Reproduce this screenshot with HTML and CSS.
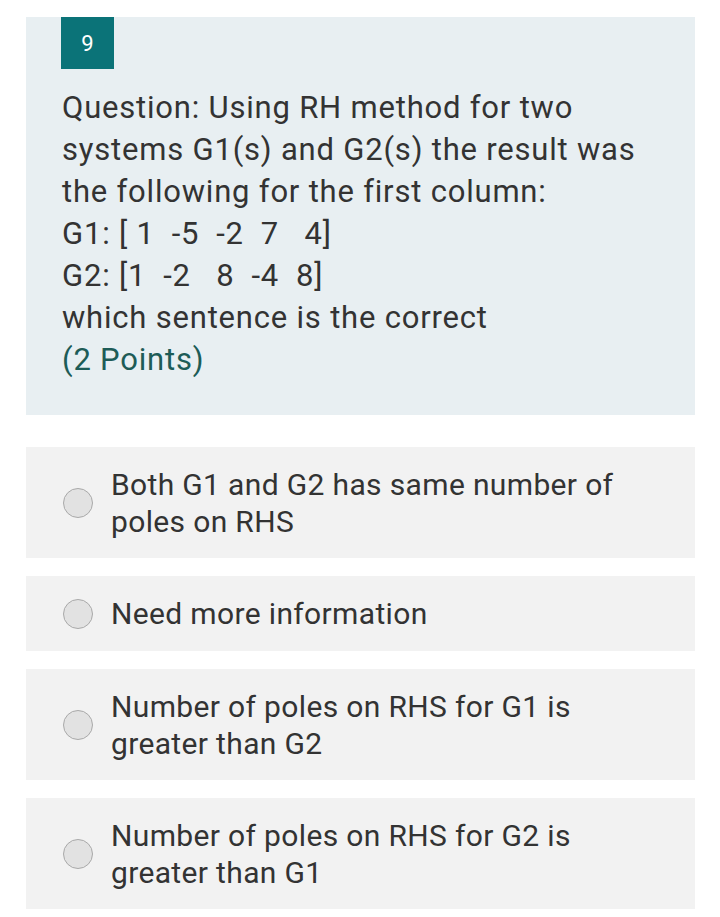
FILE: index.html
```html
<!DOCTYPE html>
<html>
<head>
<meta charset="utf-8">
<link rel="stylesheet" href="styles.css">
</head>
<body>
<div class="page">
  <section class="question">
    <div class="badge">9</div>
    <div class="qtext">
      <div>Question: Using RH method for two systems G1(s) and G2(s) the result was the following for the first column:</div>
      <div>G1: [ 1&nbsp; -5&nbsp; -2&nbsp; 7&nbsp;&nbsp; 4]</div>
      <div>G2: [1&nbsp; -2&nbsp;&nbsp; 8&nbsp; -4&nbsp; 8]</div>
      <div>which sentence is the correct</div>
      <div class="points">(2 Points)</div>
    </div>
  </section>
  <div class="options">
    <label class="option"><span class="radio"></span><span class="otext">Both G1 and G2 has same number of poles on RHS</span></label>
    <label class="option"><span class="radio"></span><span class="otext">Need more information</span></label>
    <label class="option"><span class="radio"></span><span class="otext">Number of poles on RHS for G1 is greater than G2</span></label>
    <label class="option"><span class="radio"></span><span class="otext">Number of poles on RHS for G2 is greater than G1</span></label>
  </div>
</div>
</body>
</html>
```

FILE: styles.css
```css
html, body {
  margin: 0;
  padding: 0;
  background: #ffffff;
}
body {
  font-family: Roboto, "Liberation Sans", sans-serif;
  color: #333333;
}
.page {
  padding: 17px 25px 0 26px;
}
.question {
  background: #e8eff2;
  padding: 0 35px 34px 35px;
}
.badge {
  width: 53px;
  height: 52px;
  background: #0b7378;
  color: #ffffff;
  font-size: 22px;
  display: flex;
  align-items: center;
  justify-content: center;
}
.qtext {
  margin-top: 18px;
  font-size: 31px;
  letter-spacing: 0.8px;
  line-height: 42px;
  color: #333333;
  padding-left: 1px;
}
.points {
  color: #1d5c57;
}
.options {
  margin-top: 32px;
  display: flex;
  flex-direction: column;
  gap: 18px;
}
.option {
  background: #f2f2f2;
  display: flex;
  align-items: center;
  padding: 18.5px 30px 18.5px 37px;
  min-height: 38px;
}
.radio {
  flex: none;
  width: 28px;
  height: 28px;
  border-radius: 50%;
  border: 1px solid #a9a9a9;
  background: #e2e2e2;
  margin-right: 18px;
}
.otext {
  font-size: 30px;
  letter-spacing: 0.35px;
  line-height: 37px;
  color: #333333;
}
```
